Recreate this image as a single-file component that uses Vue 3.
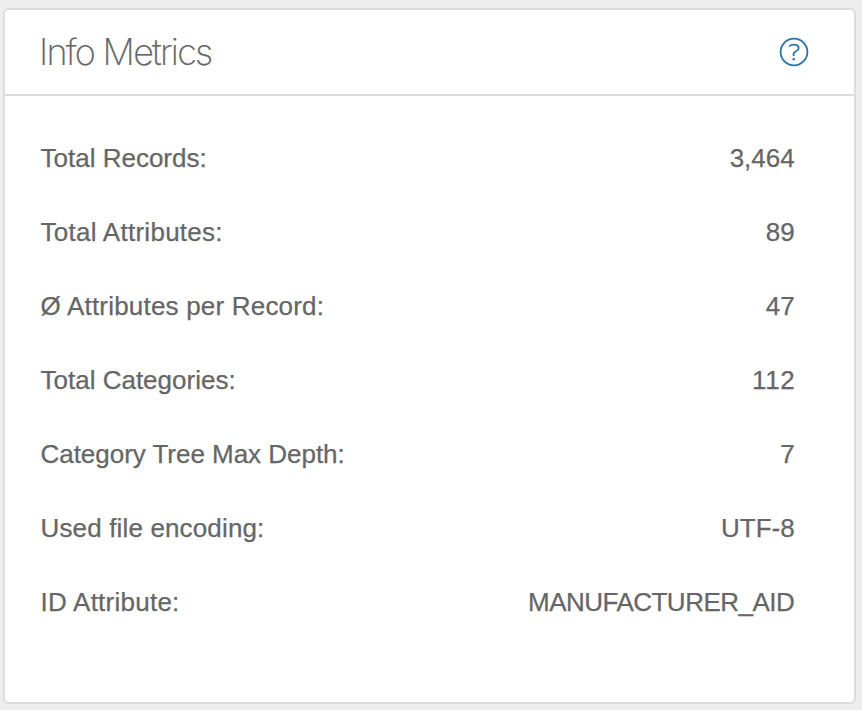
<script setup>
// tracking: per-text letter spacing in px for label and value
const metrics = [
  { label: 'Total Records:', value: '3,464', tracking: [0, 0] },
  { label: 'Total Attributes:', value: '89', tracking: [0.27, 0] },
  { label: 'Ø Attributes per Record:', value: '47', tracking: [0.2, 0] },
  { label: 'Total Categories:', value: '112', tracking: [0, 0.6] },
  { label: 'Category Tree Max Depth:', value: '7', tracking: [-0.03, 0] },
  { label: 'Used file encoding:', value: 'UTF-8', tracking: [0.15, 0] },
  { label: 'ID Attribute:', value: 'MANUFACTURER_AID', tracking: [0.25, -0.52] },
]
</script>

<template>
  <main class="page">
    <section class="card">
      <header class="head">
        <h1>Info Metrics</h1>
        <svg class="help" viewBox="0 0 30 30" role="img" aria-label="Help">
          <circle cx="15" cy="15" r="13.4" />
          <path d="M10.2 9.5C11.2 8.3 12.9 7.7 14.8 7.7c3 0 4.9 1.3 4.9 3.6 0 3.1-5.1 2.7-5.1 5.5V19" />
          <circle class="dot" cx="14.7" cy="22.3" r="1.2" />
        </svg>
      </header>
      <dl class="list">
        <div v-for="m in metrics" :key="m.label" class="row">
          <dt :style="{ letterSpacing: m.tracking[0] + 'px' }">{{ m.label }}</dt>
          <dd :style="{ letterSpacing: m.tracking[1] + 'px', marginRight: -m.tracking[1] + 'px' }">{{ m.value }}</dd>
        </div>
      </dl>
    </section>
  </main>
</template>

<style>
body { background: #eee; }
</style>

<style scoped>
.page {
  box-sizing: border-box;
  height: 710px;
  padding: 8px 6px 6px 3px;
  background: #eee;
  font-family: "Liberation Sans", Arial, sans-serif;
  color: #666;
}
.card {
  box-sizing: border-box;
  height: 100%;
  background: #fff;
  border: 2px solid #dcdcdc;
  border-radius: 6px;
}
.head {
  box-sizing: border-box;
  height: 86px;
  display: flex;
  align-items: center;
  justify-content: space-between;
  padding: 0 45px 0 34px;
  border-bottom: 2px solid #dcdcdc;
}
h1 {
  margin: 0;
  font-family: Inter, sans-serif;
  font-weight: 200;
  font-size: 36px;
  letter-spacing: -1.75px;
  -webkit-text-stroke: 0.2px #666;
}
.help {
  width: 30px;
  height: 30px;
  fill: none;
  stroke: #2a72a8;
  stroke-width: 1.8;
}
.dot { fill: #2a72a8; stroke: none; }
.list { margin: 0; padding: 25px 59.3px 0 35.5px; }
.row {
  height: 74px;
  display: flex;
  align-items: center;
  justify-content: space-between;
  font-size: 26px;
  -webkit-text-stroke: 0.25px #666;
}
dd { margin: 0; }
</style>
